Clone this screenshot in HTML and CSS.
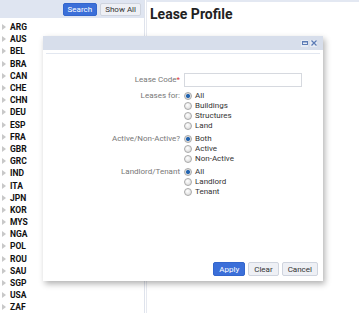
FILE: index.html
```html
<!doctype html>
<html>
  <head>
    <title>Lease Profile</title>
    <link rel="stylesheet" href="styles.css">
  </head>
  <body>
    <div class="page">
      <div class="panneau_gauche">
        <div class="barre">
          <button class="bouton bleu">Search</button>
          <button class="bouton gris">Show All</button>
        </div>
        <ul class="pays">
          <li>ARG</li><li>AUS</li><li>BEL</li><li>BRA</li><li>CAN</li><li>CHE</li>
          <li>CHN</li><li>DEU</li><li>ESP</li><li>FRA</li><li>GBR</li><li>GRC</li>
          <li>IND</li><li>ITA</li><li>JPN</li><li>KOR</li><li>MYS</li><li>NGA</li>
          <li>POL</li><li>ROU</li><li>SAU</li><li>SGP</li><li>USA</li><li>ZAF</li>
        </ul>
      </div>
      <div class="panneau_droit">
        <h1>Lease Profile</h1>
      </div>
    </div>

    <div class="dialogue">
      <div class="entete">
        <span class="icone">
          <svg width="6" height="6" viewBox="0 0 6 6"><rect x="0.5" y="1.5" width="5" height="3" fill="none" stroke="#5b7bb5" stroke-width="1"/><rect x="0" y="1" width="6" height="1.5" fill="#5b7bb5"/></svg>
        </span>
        <span class="icone">
          <svg width="6" height="6" viewBox="0 0 6 6"><path d="M0.5 0.5 L5.5 5.5 M5.5 0.5 L0.5 5.5" stroke="#5b7bb5" stroke-width="1.2"/></svg>
        </span>
      </div>
      <div class="separateur"></div>
      <div class="formulaire">
        <div class="ligne">
          <div class="etiquette etiquette_code">Lease Code<span class="requis">*</span></div>
          <div class="champs"><input class="texte" type="text"></div>
        </div>
        <div class="ligne">
          <div class="etiquette">Leases for:</div>
          <div class="champs">
            <label><input type="radio" name="a" checked> All</label>
            <label><input type="radio" name="a"> Buildings</label>
            <label><input type="radio" name="a"> Structures</label>
            <label><input type="radio" name="a"> Land</label>
          </div>
        </div>
        <div class="ligne">
          <div class="etiquette">Active/Non-Active?</div>
          <div class="champs">
            <label><input type="radio" name="b" checked> Both</label>
            <label><input type="radio" name="b"> Active</label>
            <label><input type="radio" name="b"> Non-Active</label>
          </div>
        </div>
        <div class="ligne">
          <div class="etiquette">Landlord/Tenant</div>
          <div class="champs">
            <label><input type="radio" name="c" checked> All</label>
            <label><input type="radio" name="c"> Landlord</label>
            <label><input type="radio" name="c"> Tenant</label>
          </div>
        </div>
      </div>
      <div class="actions">
        <button class="bouton bleu">Apply</button>
        <button class="bouton gris">Clear</button>
        <button class="bouton gris">Cancel</button>
      </div>
    </div>
  </body>
</html>
```
FILE: styles.css
```css
body {
  margin: 0;
  font-family: Roboto, "Liberation Sans", sans-serif;
  background-color: white;
}

.page {
  display: flex;
  height: 313px;
}

.panneau_gauche {
  width: 144px;
  border-right: 1px solid #dfe3ec;
}

.barre {
  height: 18px;
  background-color: #dfe5f1;
  display: flex;
  justify-content: flex-end;
  align-items: center;
  gap: 3px;
  padding-right: 3px;
}

.bouton {
  font-family: Roboto, "Liberation Sans", sans-serif;
  font-size: 8px;
  height: 14px;
  padding: 0 5px;
  border-radius: 2px;
  cursor: pointer;
}

.barre .bouton {
  height: 13px;
  padding: 0 4px;
}

.bleu {
  background-color: #3b6fd9;
  color: white;
  border: 1px solid #3366cc;
}

.gris {
  background-color: #eef0f5;
  color: #333;
  border: 1px solid #cfd4de;
}

.pays {
  list-style: none;
  margin: 0;
  padding: 3px 0 0 2px;
}

.pays li {
  font-size: 8.5px;
  font-weight: bold;
  color: #111;
  height: 12.2px;
  line-height: 12px;
  display: flex;
  align-items: center;
}

.pays li::before {
  content: "";
  width: 0;
  height: 0;
  border-left: 4px solid #c8c8c8;
  border-top: 3px solid transparent;
  border-bottom: 3px solid transparent;
  margin-right: 4px;
}

.panneau_droit {
  flex: 1;
  border-left: 1px solid #e6e9f0;
  border-top: 2px solid #e3e8f2;
  margin-left: 1px;
}

.panneau_droit h1 {
  font-size: 14px;
  color: #222;
  margin: 4px 0 0 3px;
}

.dialogue {
  position: absolute;
  left: 43px;
  top: 36px;
  width: 280px;
  height: 245px;
  background-color: white;
  box-shadow: 2px 3px 6px rgba(0, 0, 0, 0.3);
  display: flex;
  flex-direction: column;
}

.entete {
  height: 14px;
  background-color: #d7deeb;
  display: flex;
  justify-content: flex-end;
  align-items: center;
  gap: 2px;
  padding-right: 6px;
}

.icone {
  width: 7px;
  height: 7px;
  background-color: #e6ebf4;
  display: flex;
  align-items: center;
  justify-content: center;
}

.separateur {
  height: 1px;
  background-color: #e2e7f0;
  margin: 3px 3px 0 3px;
}

.formulaire {
  flex: 1;
  padding-top: 19px;
}

.ligne {
  display: flex;
  margin-bottom: 3px;
}

.etiquette {
  width: 137px;
  text-align: right;
  font-size: 8px;
  color: #777;
  padding-right: 3px;
  line-height: 10px;
}

.etiquette_code {
  line-height: 14px;
}

.requis {
  color: #d33;
}

.champs {
  display: flex;
  flex-direction: column;
}

.champs label {
  font-size: 8px;
  color: #333;
  height: 10px;
  line-height: 10px;
  display: flex;
  align-items: center;
}

.texte {
  width: 118px;
  height: 14px;
  box-sizing: border-box;
  border: 1px solid #d6d9df;
  margin: 0 0 1px 1px;
  padding: 0;
}

input[type="radio"] {
  appearance: none;
  width: 8px;
  height: 8px;
  margin: 0 3px 0 1px;
  border-radius: 50%;
  border: 1px solid #a9a9a9;
  background: radial-gradient(circle at 40% 35%, #ffffff, #d4d4d4);
  box-sizing: border-box;
}

input[type="radio"]:checked {
  background: radial-gradient(circle, #1f5fa8 0, #2a6bb6 1.8px, #dcdcdc 2.3px, #e8e8e8);
}

.actions {
  display: flex;
  justify-content: flex-end;
  gap: 3px;
  padding: 0 5px 5px 0;
}
```
